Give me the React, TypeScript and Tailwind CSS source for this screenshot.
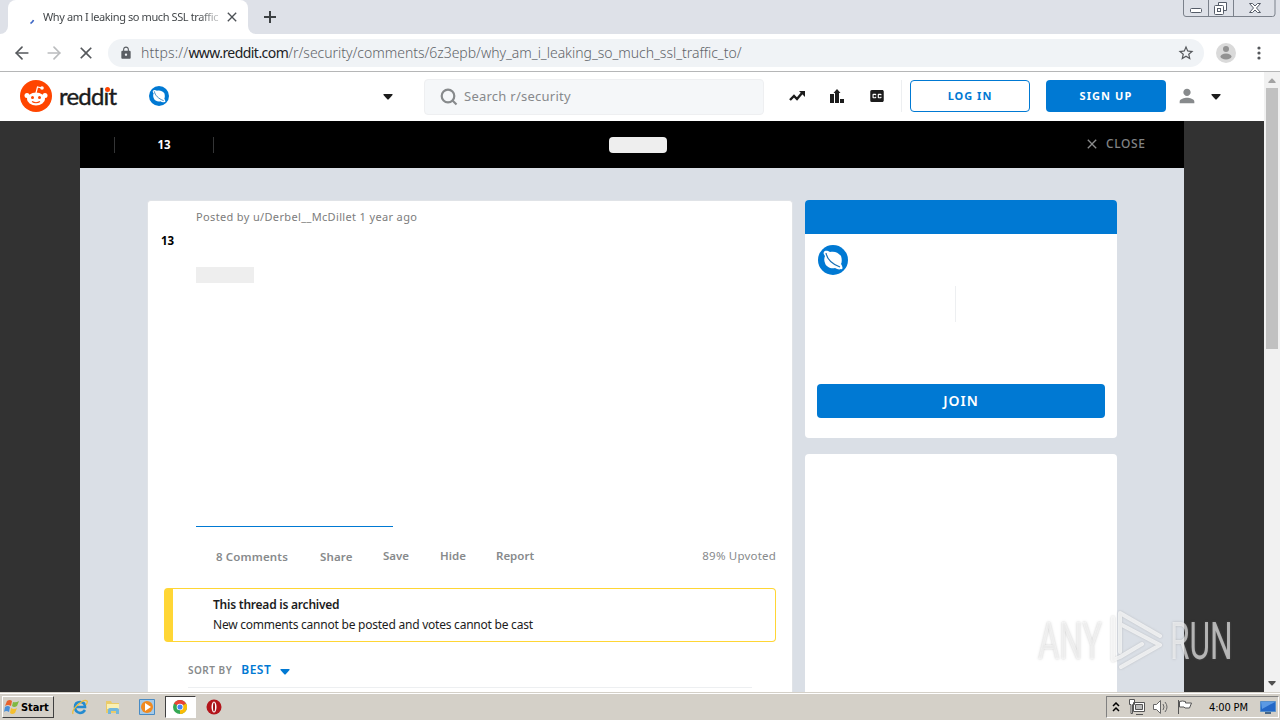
import { ReactNode } from 'react';
import { FiArrowLeft, FiArrowRight } from 'react-icons/fi';
import { MdClose, MdClosedCaption, MdLock, MdPerson, MdStarBorder } from 'react-icons/md';

function Caret({ className }: { className: string }) {
  return (
    <svg viewBox="0 0 10 6" className={className} fill="currentColor">
      <path d="M.5 0h9v1L5.500 5.500h-1L.5 1z" />
    </svg>
  );
}

function Planet({ className }: { className: string }) {
  return (
    <svg viewBox="0 0 30 30" className={className}>
      <circle cx="15" cy="15" r="15" fill="#0079d3" />
      <path
        d="M6 7c1-2 4-1 6 0 4-1 8 0 11 4 1 3 1 6 0 8 2 3 2 6 0 5-2 1-4 0-6-1-4 1-9-1-10-5-1-2-1-5 0-7-1-1-2-3-1-4z"
        fill="#fff"
      />
      <path d="M8 8c1 6 6 11 14 14" fill="none" stroke="#1870b5" strokeWidth="1.2" />
    </svg>
  );
}

function WindowButtons() {
  return (
    <svg viewBox="0 0 94 18" className="mr-[3px] h-[18px] w-[94px]" fill="none" stroke="#7b818b">
      <path d="M.5 0v14q0 2.500 2.500 2.500h86.500q2.500 0 2.500-2.500V0M25.500 0v16M50.500 0v16" />
      <g stroke="#555c68">
        <rect x="7.500" y="8.500" width="11" height="4" rx="1" fill="#fff" />
        <path d="M35.500 5V2.500h8v8H41" fill="#fff" />
        <rect x="31.500" y="5.500" width="9" height="9" rx="1" fill="#fff" />
        <rect x="34.500" y="8.500" width="3" height="3" />
        <path
          d="M66.500 3.500h3l2.500 2.500 2.500-2.500h3l-4 4.500 4 4.500h-3L72 10l-2.500 2.500h-3l4-4.500z"
          fill="#fff"
        />
      </g>
    </svg>
  );
}

function BrowserChrome() {
  return (
    <div className="font-['Noto_Sans',sans-serif]">
      <div className="flex h-[34px] items-start justify-between bg-[#dee1e8]">
        <div className="flex">
          <div className="h-[34px] w-2 bg-white">
            <div className="h-full rounded-br-lg bg-[#dee1e8]" />
          </div>
          <div className="flex h-[34px] w-[240px] items-center rounded-t-lg bg-white">
            <svg viewBox="0 0 6 8" className="ml-[21px] h-2 w-1.5 translate-y-1">
              <path d="M1.500 6.500Q4 5 4.500 3" fill="none" stroke="#3f68c5" strokeWidth="1.600" />
            </svg>
            <div className="ml-2 w-[177px] whitespace-nowrap bg-gradient-to-r from-[#3c4043] from-88% to-[#3c4043]/20 bg-clip-text text-[11px] tracking-[-0.4px] text-transparent">
              Why am I leaking so much SSL traffic
            </div>
            <MdClose className="ml-1 size-4 text-[#4d5156]" />
          </div>
          <div className="h-[34px] w-2 bg-white">
            <div className="h-full rounded-bl-lg bg-[#dee1e8]" />
          </div>
          <svg viewBox="0 0 12 12" className="ml-2 mt-[11px] size-3">
            <path d="M6 0v12M0 6h12" stroke="#3c4043" strokeWidth="2" />
          </svg>
        </div>
        <WindowButtons />
      </div>
      <div className="flex h-[38px] items-center border-b border-[#b5b6b7] bg-white">
        <FiArrowLeft className="ml-3 size-5 text-[#55585c]" />
        <FiArrowRight className="ml-3 size-5 text-[#babcbe]" />
        <MdClose className="ml-3 size-5 text-[#55585c]" />
        <div className="ml-3 flex h-7 w-[1096px] items-center rounded-full bg-[#f0f3f6]">
          <MdLock className="ml-[11px] size-3.5 text-[#5a5e63]" />
          <span className="ml-2 w-[1036px] whitespace-nowrap pb-px text-[14px] font-light tracking-[-0.03px] text-[#5f6368]">
            <span className="tracking-[0.18px]">https://</span>
            <span className="font-normal tracking-[-0.55px] text-[#202124]">www.reddit.com</span>
            /r/security/comments/6z3epb/why_am_i_leaking_so_much_ssl_traffic_to/
          </span>
          <MdStarBorder className="size-[18px] text-[#55585c]" />
        </div>
        <svg viewBox="0 0 20 20" className="ml-3 size-5">
          <circle cx="10" cy="10" r="10" fill="#dadada" />
          <circle cx="10" cy="6" r="3" fill="#929292" />
          <ellipse cx="10" cy="13.500" rx="5.500" ry="3" fill="#929292" />
        </svg>
        <svg viewBox="0 0 4 14" className="ml-[21px] h-3.5 w-1" fill="#55585c">
          <circle cx="2" cy="2" r="1.600" />
          <circle cx="2" cy="7" r="1.600" />
          <circle cx="2" cy="12" r="1.600" />
        </svg>
      </div>
    </div>
  );
}

function Snoo() {
  return (
    <svg viewBox="0 0 32 32" className="ml-5 size-8">
      <circle cx="16" cy="16" r="16" fill="#ff4500" />
      <ellipse cx="16" cy="19" rx="9" ry="6.500" fill="#fff" />
      <circle cx="7" cy="15.500" r="2.500" fill="#fff" />
      <circle cx="25" cy="15.500" r="2.500" fill="#fff" />
      <path d="M16 13l1.500-6 4.500 1" fill="none" stroke="#fff" strokeWidth="1.200" />
      <circle cx="22" cy="8" r="1.800" fill="#fff" />
      <circle cx="12.500" cy="17.500" r="1.500" fill="#ff4500" />
      <circle cx="19.500" cy="17.500" r="1.500" fill="#ff4500" />
      <path d="M12 21.500q4 2.500 8 0" fill="none" stroke="#ff4500" strokeWidth="1.200" />
    </svg>
  );
}

function SiteHeader() {
  return (
    <header className="flex h-[49px] items-center bg-white pb-px text-[#1c1c1c]">
      <Snoo />
      <span className="relative ml-[7px] w-[59px] font-['Lato',sans-serif] text-[24px] leading-6 tracking-[-0.8px] [-webkit-text-stroke:0.4px]">
        redd&#305;t
        <span className="absolute left-[46px] top-[3px] size-[5px] rounded-full bg-[#ff4500]" />
      </span>
      <Planet className="ml-[31px] size-5" />
      <Caret className="ml-[214px] mt-0.5 h-[6px] w-[10px]" />
      <div className="ml-[31px] mt-px flex h-9 w-[340px] items-center rounded border border-[#eeeff1] bg-[#f5f7f9]">
        <svg viewBox="0 0 18 18" className="ml-[15px] size-[18px]" fill="none" stroke="#878a8c" strokeWidth="2.200">
          <circle cx="8" cy="8" r="6.300" />
          <path d="M12.500 12.500l4 4" />
        </svg>
        <span className="ml-1.5 pt-px text-[13px] tracking-[0.25px] text-[#87898c]">Search r/security</span>
      </div>
      <svg viewBox="0 0 16 12" className="ml-[25px] h-3 w-4" fill="none" stroke="#1c1c1c" strokeWidth="2.400">
        <path d="M1 10l4-4 3 3 5-6" />
        <path d="M10 1h6v6z" fill="#1c1c1c" stroke="none" />
      </svg>
      <svg viewBox="0 0 14 14" className="ml-[25px] size-3.5" fill="#1c1c1c">
        <path d="M0 5h4v9H0zM5 14V4H3.500L7 0l3.500 4H9v10zM10 10h4v4h-4z" />
      </svg>
      <MdClosedCaption className="ml-[24px] size-[18px]" />
      <div className="ml-[15px] h-8 w-px bg-[#edeff1]" />
      <button className="ml-2 h-8 w-[120px] rounded border border-[#0079d3] text-[11px] font-bold tracking-[1px] text-[#0079d3]">
        LOG IN
      </button>
      <button className="ml-4 h-8 w-[120px] rounded bg-[#0079d3] text-[11px] font-bold tracking-[1.1px] text-white">
        SIGN UP
      </button>
      <MdPerson className="ml-[10px] size-[22px] text-[#878a8c]" />
      <Caret className="ml-[13px] mt-0.5 h-[6px] w-[10px]" />
    </header>
  );
}

function PostBar() {
  return (
    <div className="flex h-[47px] items-center bg-black text-[12px]">
      <div className="ml-[34px] h-4 w-px bg-[#343536]" />
      <span className="w-[98px] text-center text-[11.500px] font-bold text-white">13</span>
      <div className="h-4 w-px bg-[#343536]" />
      <div className="ml-[395px] h-4 w-[58px] rounded-sm bg-[#eeeeee]" />
      <MdClose className="mb-0.5 ml-[417px] size-4 text-[#8a8b8c]" />
      <span className="mb-px ml-1.5 font-medium tracking-[0.6px] text-[#818384]">CLOSE</span>
    </div>
  );
}

function Post() {
  return (
    <article className="flex h-[492px] w-[646px] flex-col rounded-t border border-b-0 border-[#e0e3e7] bg-white">
      <div className="flex h-[326px]">
        <span className="ml-[13px] mt-[31px] w-[35px] text-[11.500px] font-bold text-black">13</span>
        <div className="flex flex-col">
          <span className="mt-[7px] text-[11px] leading-[18px] tracking-[0.35px] text-[#7c7c7c]">
            Posted by u/Derbel__McDillet 1 year ago
          </span>
          <div className="mt-[41px] h-4 w-[58px] bg-[#eeeeee]" />
          <div className="mt-[243px] h-px w-[197px] shrink-0 bg-[#0079d3]" />
        </div>
      </div>
      <div className="flex h-[61px] items-center pb-1 pl-[68px] pr-4 text-[11.500px] font-semibold text-[#878a8c]">
        <span className="w-[104px] pt-0.5 tracking-[0.15px]">8 Comments</span>
        <span className="w-[63px] pt-0.5 tracking-[0.15px]">Share</span>
        <span className="w-[57px]">Save</span>
        <span className="w-[56px]">Hide</span>
        <span>Report</span>
        <span className="ml-auto font-normal tracking-[0.2px]">89% Upvoted</span>
      </div>
      <div className="ml-4 flex h-[54px] w-[612px] shrink-0 flex-col justify-center rounded border border-l-[9px] border-[#ffd635] pl-10 text-[12px] leading-5 tracking-[-0.23px] text-[#1c1c1c]">
        <span className="font-semibold">This thread is archived</span>
        <span>New comments cannot be posted and votes cannot be cast</span>
      </div>
      <div className="mx-10 flex h-[46px] items-end border-b border-[#edeff1] pb-[7px] leading-5">
        <span className="text-[10px] font-semibold tracking-[0.5px] text-[#878a8c]">SORT BY</span>
        <span className="ml-[9px] text-[12px] font-semibold tracking-[0.5px] text-[#0079d3]">BEST</span>
        <Caret className="mb-[5px] ml-[9px] h-[6px] w-[10px] text-[#0079d3]" />
      </div>
    </article>
  );
}

function Sidebar() {
  return (
    <aside className="ml-3 flex w-[312px] flex-col">
      <div className="h-[238px] rounded bg-white">
        <div className="h-[34px] rounded-t bg-[#0079d3]" />
        <Planet className="ml-[13px] mt-[11px] size-[30px]" />
        <div className="ml-[150px] mt-[11px] h-9 w-px bg-[#edeff1]" />
        <button className="ml-3 mt-[62px] h-[34px] w-[288px] rounded bg-[#0079d3] pb-px text-[14px] font-semibold tracking-[1px] text-white">
          JOIN
        </button>
      </div>
      <div className="mt-4 flex-1 rounded-t bg-white" />
    </aside>
  );
}

function Scrollbar() {
  return (
    <div className="flex w-4 flex-col items-center bg-[#f1f1f1]">
      <Caret className="mt-1.5 h-[5px] w-2 rotate-180 text-[#a3a3a3]" />
      <div className="mt-[5px] h-[261px] w-3 bg-[#c1c1c1]" />
      <Caret className="mb-1.5 mt-auto h-[5px] w-2 text-[#505050]" />
    </div>
  );
}

function Watermark() {
  return (
    <div className="absolute left-[1038px] top-[610px] flex h-16 w-[194px] items-center justify-between font-['Roboto',sans-serif] text-[52px] text-white/60 [text-shadow:0_0_3px_#77777766]">
      <span className="w-[66px]">
        <span className="inline-block origin-left scale-x-[0.63]">ANY</span>
      </span>
      <svg viewBox="0 0 60 64" className="mb-1 h-16 w-[60px] shrink-0 drop-shadow-[0_0_1px_#8888]" fill="none" stroke="#ffffffb0" strokeWidth="4">
        <path d="M13 44V5l40 23M13 16l40 21-39 22M6 10v42l7-3 22-13" strokeLinecap="round" strokeLinejoin="round" />
      </svg>
      <span className="w-[62px]">
        <span className="inline-block origin-left scale-x-[0.61]">RUN</span>
      </span>
    </div>
  );
}

function TaskButton({ children, active }: { children: ReactNode; active?: boolean }) {
  return (
    <div
      className={
        active
          ? 'flex h-[22px] w-[31px] items-center justify-center border border-[#fff] border-l-[#404040] border-t-[#404040] bg-white'
          : 'flex h-[22px] w-[31px] items-center justify-center'
      }
    >
      {children}
    </div>
  );
}

function Taskbar() {
  return (
    <footer className="flex h-7 items-center border-t border-[#d4d0c8] bg-[#d4d0c8] pt-px font-['DejaVu_Sans_Condensed','DejaVu_Sans',sans-serif] text-[11px] text-black shadow-[inset_0_1px_0_#fff]">
      <div className="ml-0.5 flex h-[22px] w-[52px] items-center border border-[#404040] border-l-white border-t-white font-bold tracking-[-0.1px]">
        <svg viewBox="0 0 16 16" className="ml-px size-4 shrink-0">
          <path d="M3 2q3-2 5 0L7 7Q4 5 1 7z" fill="#e8622c" />
          <path d="M9 3q3 1 6-1l-2 5q-3 2-5 0z" fill="#7fb842" />
          <path d="M1 8q3-2 5 0l-1 5q-3-2-5 0z" fill="#4a8fd8" />
          <path d="M7 9q3 2 6 0l-2 5q-3 2-5 0z" fill="#f5bf2d" />
        </svg>
        <span className="ml-px pt-0.5">Start</span>
      </div>
      <div className="ml-2.5 flex gap-[2.500px]">
        <TaskButton>
          <svg viewBox="0 0 16 16" className="size-4" fill="none">
            <path d="M13 11q-2 3-5 3-5-1-5-6 0-5 5-5 5 0 5 5H4" stroke="#248bd0" strokeWidth="2.600" />
            <path d="M1 15C-1 10 12-1 15 2q1 1-1 4" stroke="#eebd38" strokeWidth="1.200" />
          </svg>
        </TaskButton>
        <TaskButton>
          <svg viewBox="0 0 16 16" className="size-4">
            <path d="M1 2h5l1 2h7v10H1z" fill="#eacb69" />
            <path d="M2 5h12v5H2z" fill="#faf0b2" />
            <path d="M3 15v-4q0-2 2-2h7q2 0 2 2v4h-3v-3H6v3z" fill="#72b7dc" />
          </svg>
        </TaskButton>
        <TaskButton>
          <svg viewBox="0 0 16 16" className="size-4">
            <path d="M.5.500h15v15H.500z" fill="#a5cae8" stroke="#488bc4" />
            <circle cx="8" cy="8" r="6" fill="#f08a20" />
            <path d="M6 4l6 4-6 4z" fill="#fff" />
          </svg>
        </TaskButton>
        <TaskButton active>
          <svg viewBox="0 0 16 16" className="size-3.5">
            <circle cx="8" cy="8" r="8" fill="#34a853" />
            <path d="M8 8L1 4a8 8 0 0 1 14 0z" fill="#ea4335" />
            <path d="M8 8l7-4a8 8 0 0 1-7 12z" fill="#fbbc05" />
            <circle cx="8" cy="8" r="3.800" fill="#fff" />
            <circle cx="8" cy="8" r="2.900" fill="#4285f4" />
          </svg>
        </TaskButton>
        <TaskButton>
          <svg viewBox="0 0 16 16" className="size-4">
            <circle cx="8" cy="8" r="7.500" fill="#b3151b" />
            <ellipse cx="8" cy="8" rx="2.500" ry="5.500" fill="#fff" />
            <ellipse cx="8" cy="8" rx="1" ry="4.500" fill="#9e1015" />
          </svg>
        </TaskButton>
      </div>
      <div className="ml-auto mr-px flex h-[22px] w-[173px] items-center border border-white border-l-[#808080] border-t-[#808080]">
        <svg viewBox="0 0 8 10" className="ml-[5px] h-2.5 w-2" fill="none" stroke="#000" strokeWidth="1.500">
          <path d="M1 4l3-3 3 3M1 9l3-3 3 3" />
        </svg>
        <svg viewBox="0 0 16 16" className="ml-[9px] size-4" fill="#fff" stroke="#555">
          <path d="M4.500 3.500h11v9h-11zM7 15.500h7M.500.500h5v5h-2v9H2v-9H.500z" />
          <path d="M6.500 5.500h7v5h-7z" fill="#bbb" />
        </svg>
        <svg viewBox="0 0 16 16" className="ml-2 size-4" fill="none" stroke="#666">
          <path d="M.500 5.500h3l4-4v13l-4-4h-3z" fill="#fff" />
          <path d="M10 5q2 3 0 6M12 3q4 5 0 10" />
        </svg>
        <svg viewBox="0 0 16 16" className="ml-2 size-4" fill="#fff" stroke="#555">
          <path d="M1.500 1v14M2.500 2.500q3-1 6 0V4h6l-2 5H8L7 8H2.500z" />
        </svg>
        <span className="ml-[16px] w-[42px] whitespace-nowrap pt-0.5 tracking-[-0.15px]">4:00 PM</span>
        <svg viewBox="0 0 16 14" className="ml-[9px] h-3.5 w-4">
          <path d="M.500 1.500h15v10H.500z" fill="#2468c7" stroke="#5890c9" />
          <path d="M1 2h14L2 9z" fill="#5b9ae4" />
          <path d="M5 13h6" stroke="#476788" strokeWidth="2" />
        </svg>
      </div>
    </footer>
  );
}

function App() {
  return (
    <div className="relative flex h-[720px] w-[1280px] flex-col overflow-hidden bg-[#323232]">
      <BrowserChrome />
      <div className="flex h-[620px] font-['Noto_Sans',sans-serif]">
        <div className="w-[1264px]">
          <SiteHeader />
          <main className="mx-20 h-[571px] bg-[#dadfe6]">
            <PostBar />
            <div className="flex h-[524px] pl-[67px] pt-8">
              <Post />
              <Sidebar />
            </div>
          </main>
        </div>
        <Scrollbar />
      </div>
      <Taskbar />
      <Watermark />
    </div>
  );
}

export default App;
